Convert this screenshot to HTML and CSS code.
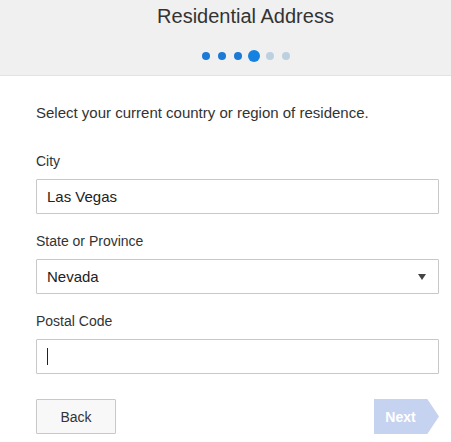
FILE: index.html
```html
<!DOCTYPE html>
<html lang="en">
<head>
    <meta charset="UTF-8">
    <meta name="viewport" content="width=device-width, initial-scale=1.0">
    <title>Residential Address</title>
    <link rel="stylesheet" href="styles.css">
</head>
<body>
    <div class="header">
        <h1>Residential Address</h1>
        <div class="steps">
            <span class="dot"></span>
            <span class="dot"></span>
            <span class="dot"></span>
            <span class="dot current"></span>
            <span class="dot todo"></span>
            <span class="dot todo"></span>
        </div>
    </div>

    <div class="form">
        <p class="intro">Select your current country or region of residence.</p>

        <label class="field">
            <span class="label">City</span>
            <input type="text" class="input" value="Las Vegas">
        </label>

        <label class="field">
            <span class="label">State or Province</span>
            <span class="select">
                <span>Nevada</span>
                <span class="caret"></span>
            </span>
        </label>

        <label class="field">
            <span class="label">Postal Code</span>
            <span class="input"><span class="cursor"></span></span>
        </label>

        <div class="actions">
            <button class="back">Back</button>
            <button class="next" disabled>Next</button>
        </div>
    </div>
</body>
</html>
```

FILE: styles.css
```css
body {
    margin: 0;
    font-family: Arial, "Liberation Sans", sans-serif;
    color: #333;
    background: white;
}
.header {
    background: #f0f0f0;
    border-bottom: 1px solid #e3e3e3;
    height: 76px;
    box-sizing: border-box;
    padding-left: 40px;
}
.header h1 {
    margin: 0;
    padding-top: 4px;
    font-size: 20px;
    font-weight: normal;
    text-align: center;
    line-height: 24px;
    color: #333;
}
.steps {
    display: flex;
    justify-content: center;
    align-items: center;
    gap: 8px;
    margin-top: 22px;
}
.dot {
    width: 8px;
    height: 8px;
    border-radius: 50%;
    background: #1a7ad6;
}
.dot.current {
    width: 12px;
    height: 12px;
    margin: 0 -2px;
    background: #1581e0;
}
.dot.todo {
    background: #bdd0e0;
}
.form {
    padding: 0 12px 0 36px;
}
.intro {
    margin: 27px 0 0;
    font-size: 15px;
    line-height: 20px;
}
.field {
    display: block;
    margin-top: 30px;
}
.field + .field {
    margin-top: 19px;
}
.label {
    display: block;
    font-size: 14px;
    line-height: 17px;
    margin-bottom: 9px;
}
.input, .select {
    display: flex;
    align-items: center;
    width: 100%;
    height: 35px;
    box-sizing: border-box;
    border: 1px solid #c8c8c8;
    border-radius: 1px;
    padding: 0 10px;
    font-family: inherit;
    font-size: 15px;
    color: #222;
    background: white;
    outline: none;
}
.select {
    justify-content: space-between;
}
.caret {
    width: 0;
    height: 0;
    border-left: 4px solid transparent;
    border-right: 4px solid transparent;
    border-top: 6px solid #444;
    margin-right: 2px;
}
.cursor {
    width: 1px;
    height: 17px;
    background: #222;
}
.actions {
    display: flex;
    justify-content: space-between;
    margin-top: 25px;
}
.back {
    width: 80px;
    height: 35px;
    background: #f8f8f8;
    border: 1px solid #c8c8c8;
    border-radius: 1px;
    font-family: inherit;
    font-size: 14px;
    color: #333;
}
.next {
    width: 65px;
    height: 35px;
    border: none;
    background: #c6d3f0;
    color: white;
    font-family: inherit;
    font-size: 14px;
    font-weight: bold;
    padding: 0 12px 0 0;
    clip-path: polygon(0 0, 82% 0, 100% 50%, 82% 100%, 0 100%);
}
```
